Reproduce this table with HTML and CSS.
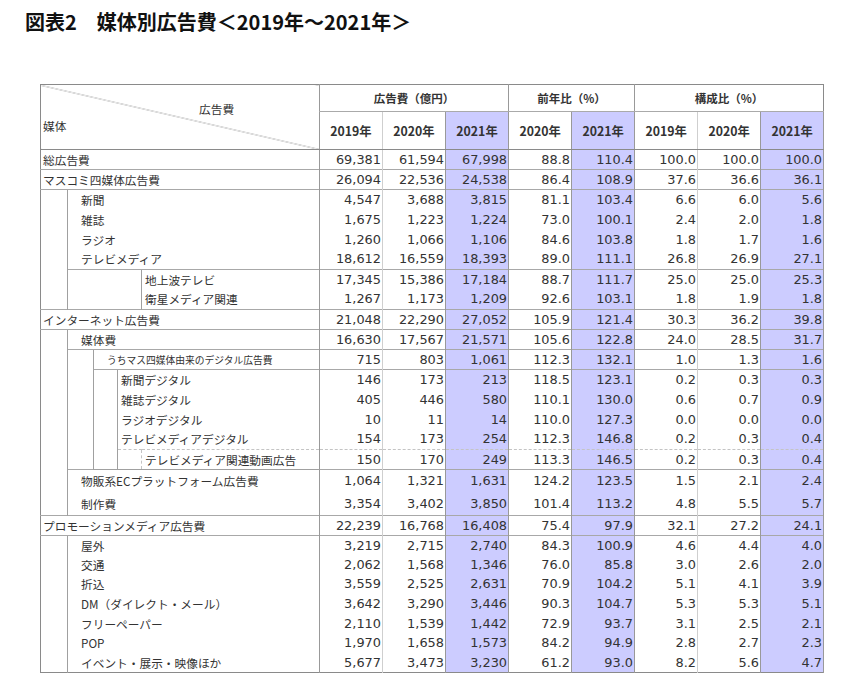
FILE: index.html
```html
<!DOCTYPE html>
<html lang="ja">
<head>
<meta charset="utf-8">
<title>図表2 媒体別広告費</title>
<link rel="stylesheet" href="styles.css">
</head>
<body>
<h1 class="title">図表2　媒体別広告費＜2019年～2021年＞</h1>
<table class="t">
<colgroup>
<col class="w1"><col class="w2"><col class="w3"><col class="w4"><col class="w5">
<col class="wd"><col class="wd"><col class="wd"><col class="wd"><col class="wd"><col class="wd"><col class="wd"><col class="wd">
</colgroup>
<thead>
<tr class="h1">
<th colspan="5" rowspan="2" class="diag"><div class="dg-top">広告費</div><div class="dg-bot">媒体</div></th>
<th colspan="3" class="grp">広告費（億円）</th>
<th colspan="2" class="grp">前年比（%）</th>
<th colspan="3" class="grp">構成比（%）</th>
</tr>
<tr class="h2">
<th class="yr c1">2019年</th><th class="yr">2020年</th><th class="yr s">2021年</th><th class="yr">2020年</th><th class="yr s">2021年</th><th class="yr">2019年</th><th class="yr">2020年</th><th class="yr s">2021年</th>
</tr>
</thead>
<tbody>
<tr><td colspan="5" class="lb">総広告費</td><td class="c1">69,381</td><td>61,594</td><td class="s">67,998</td><td>88.8</td><td class="s">110.4</td><td>100.0</td><td>100.0</td><td class="s">100.0</td></tr>
<tr class="sep"><td colspan="5" class="lb bt">マスコミ四媒体広告費</td><td class="c1">26,094</td><td>22,536</td><td class="s">24,538</td><td>86.4</td><td class="s">108.9</td><td>37.6</td><td>36.6</td><td class="s">36.1</td></tr>
<tr class="sep"><td rowspan="6" class="gap"></td><td colspan="4" class="lb l1 bl bt">新聞</td><td class="c1">4,547</td><td>3,688</td><td class="s">3,815</td><td>81.1</td><td class="s">103.4</td><td>6.6</td><td>6.0</td><td class="s">5.6</td></tr>
<tr><td colspan="4" class="lb l1 bl">雑誌</td><td class="c1">1,675</td><td>1,223</td><td class="s">1,224</td><td>73.0</td><td class="s">100.1</td><td>2.4</td><td>2.0</td><td class="s">1.8</td></tr>
<tr><td colspan="4" class="lb l1 bl">ラジオ</td><td class="c1">1,260</td><td>1,066</td><td class="s">1,106</td><td>84.6</td><td class="s">103.8</td><td>1.8</td><td>1.7</td><td class="s">1.6</td></tr>
<tr><td colspan="4" class="lb l1 bl">テレビメディア</td><td class="c1">18,612</td><td>16,559</td><td class="s">18,393</td><td>89.0</td><td class="s">111.1</td><td>26.8</td><td>26.9</td><td class="s">27.1</td></tr>
<tr class="sep"><td colspan="3" rowspan="2" class="gap bl"></td><td class="lb l4 bl bt">地上波テレビ</td><td class="c1">17,345</td><td>15,386</td><td class="s">17,184</td><td>88.7</td><td class="s">111.7</td><td>25.0</td><td>25.0</td><td class="s">25.3</td></tr>
<tr><td class="lb l4 bl">衛星メディア関連</td><td class="c1">1,267</td><td>1,173</td><td class="s">1,209</td><td>92.6</td><td class="s">103.1</td><td>1.8</td><td>1.9</td><td class="s">1.8</td></tr>
<tr class="sep"><td colspan="5" class="lb bt">インターネット広告費</td><td class="c1">21,048</td><td>22,290</td><td class="s">27,052</td><td>105.9</td><td class="s">121.4</td><td>30.3</td><td>36.2</td><td class="s">39.8</td></tr>
<tr class="sep"><td rowspan="9" class="gap"></td><td colspan="4" class="lb l1 bl bt">媒体費</td><td class="c1">16,630</td><td>17,567</td><td class="s">21,571</td><td>105.6</td><td class="s">122.8</td><td>24.0</td><td>28.5</td><td class="s">31.7</td></tr>
<tr class="sep"><td rowspan="6" class="gap bl"></td><td colspan="3" class="lb l1 small bl bt">うちマス四媒体由来のデジタル広告費</td><td class="c1">715</td><td>803</td><td class="s">1,061</td><td>112.3</td><td class="s">132.1</td><td>1.0</td><td>1.3</td><td class="s">1.6</td></tr>
<tr class="sep"><td rowspan="5" class="gap bl bb"></td><td colspan="2" class="lb l4 bl bt">新聞デジタル</td><td class="c1">146</td><td>173</td><td class="s">213</td><td>118.5</td><td class="s">123.1</td><td>0.2</td><td>0.3</td><td class="s">0.3</td></tr>
<tr><td colspan="2" class="lb l4 bl">雑誌デジタル</td><td class="c1">405</td><td>446</td><td class="s">580</td><td>110.1</td><td class="s">130.0</td><td>0.6</td><td>0.7</td><td class="s">0.9</td></tr>
<tr><td colspan="2" class="lb l4 bl">ラジオデジタル</td><td class="c1">10</td><td>11</td><td class="s">14</td><td>110.0</td><td class="s">127.3</td><td>0.0</td><td>0.0</td><td class="s">0.0</td></tr>
<tr><td colspan="2" class="lb l4 bl">テレビメディアデジタル</td><td class="c1">154</td><td>173</td><td class="s">254</td><td>112.3</td><td class="s">146.8</td><td>0.2</td><td>0.3</td><td class="s">0.4</td></tr>
<tr class="dsep"><td class="gap bl bb"></td><td class="lb l4 dl dt bb">テレビメディア関連動画広告</td><td class="c1">150</td><td>170</td><td class="s">249</td><td>113.3</td><td class="s">146.5</td><td>0.2</td><td>0.3</td><td class="s">0.4</td></tr>
<tr class="sep tall"><td colspan="4" class="lb l1 bl">物販系ECプラットフォーム広告費</td><td class="c1">1,064</td><td>1,321</td><td class="s">1,631</td><td>124.2</td><td class="s">123.5</td><td>1.5</td><td>2.1</td><td class="s">2.4</td></tr>
<tr class="tall"><td colspan="4" class="lb l1 bl">制作費</td><td class="c1">3,354</td><td>3,402</td><td class="s">3,850</td><td>101.4</td><td class="s">113.2</td><td>4.8</td><td>5.5</td><td class="s">5.7</td></tr>
<tr class="sep"><td colspan="5" class="lb bt">プロモーションメディア広告費</td><td class="c1">22,239</td><td>16,768</td><td class="s">16,408</td><td>75.4</td><td class="s">97.9</td><td>32.1</td><td>27.2</td><td class="s">24.1</td></tr>
<tr class="sep pr"><td rowspan="7" class="gap"></td><td colspan="4" class="lb l1 bl bt">屋外</td><td class="c1">3,219</td><td>2,715</td><td class="s">2,740</td><td>84.3</td><td class="s">100.9</td><td>4.6</td><td>4.4</td><td class="s">4.0</td></tr>
<tr class="pr"><td colspan="4" class="lb l1 bl">交通</td><td class="c1">2,062</td><td>1,568</td><td class="s">1,346</td><td>76.0</td><td class="s">85.8</td><td>3.0</td><td>2.6</td><td class="s">2.0</td></tr>
<tr class="pr"><td colspan="4" class="lb l1 bl">折込</td><td class="c1">3,559</td><td>2,525</td><td class="s">2,631</td><td>70.9</td><td class="s">104.2</td><td>5.1</td><td>4.1</td><td class="s">3.9</td></tr>
<tr class="pr"><td colspan="4" class="lb l1 bl">DM（ダイレクト・メール）</td><td class="c1">3,642</td><td>3,290</td><td class="s">3,446</td><td>90.3</td><td class="s">104.7</td><td>5.3</td><td>5.3</td><td class="s">5.1</td></tr>
<tr class="pr"><td colspan="4" class="lb l1 bl">フリーペーパー</td><td class="c1">2,110</td><td>1,539</td><td class="s">1,442</td><td>72.9</td><td class="s">93.7</td><td>3.1</td><td>2.5</td><td class="s">2.1</td></tr>
<tr class="pr"><td colspan="4" class="lb l1 bl">POP</td><td class="c1">1,970</td><td>1,658</td><td class="s">1,573</td><td>84.2</td><td class="s">94.9</td><td>2.8</td><td>2.7</td><td class="s">2.3</td></tr>
<tr class="pr"><td colspan="4" class="lb l1 bl">イベント・展示・映像ほか</td><td class="c1">5,677</td><td>3,473</td><td class="s">3,230</td><td>61.2</td><td class="s">93.0</td><td>8.2</td><td>5.6</td><td class="s">4.7</td></tr>
</tbody>
</table>
</body>
</html>
```

FILE: styles.css
```css
html, body {
  margin: 0;
  padding: 0;
  background: #fff;
}

body {
  font-family: "Noto Sans CJK JP", "Noto Sans", sans-serif;
  color: #333;
}

.title {
  margin: 0;
  padding: 8px 0 0 25px;
  font-size: 20px;
  line-height: 27px;
  font-weight: 700;
  color: #111;
}

.t {
  margin: 49px 0 0 40px;
  border-collapse: collapse;
  table-layout: fixed;
  width: 784px;
  border: 1px solid #8a8a8a;
  font-size: 11.7px;
  line-height: 14px;
}

.w1 { width: 27px; }
.w2 { width: 26px; }
.w3 { width: 24px; }
.w4 { width: 24px; }
.w5 { width: 178px; }
.wd { width: 63px; }

.t th,
.t td {
  padding: 0;
  vertical-align: middle;
  white-space: nowrap;
}

/* header */
.h1 { height: 27px; }
.h2 { height: 38px; }

.diag {
  text-align: left;
  font-weight: 400;
  border-bottom: 1px solid #8a8a8a;
  background: linear-gradient(to top right, transparent calc(50% - 0.6px), #a0a0a0 50%, transparent calc(50% + 0.6px));
  vertical-align: top;
  padding-top: 14px;
}

.dg-top {
  padding-left: 158px;
  line-height: 17px;
}

.dg-bot {
  padding-left: 2px;
  line-height: 17px;
}

.grp {
  font-size: 11.5px;
  font-weight: 700;
  border-left: 1px solid #999;
  border-bottom: 1px solid #aaa;
  text-align: center;
}

.yr {
  font-size: 12.3px;
  font-weight: 700;
  text-align: center;
  border-left: 1px solid #cfcfcf;
  border-bottom: 1px solid #8a8a8a;
}

/* body rows */
tbody tr { height: 20px; }
tbody tr.tall { height: 23px; }
tbody tr.pr { height: 19.6px; }

.t td {
  font-family: "DejaVu Sans", "Noto Sans CJK JP", sans-serif;
  font-size: 12.9px;
  text-align: right;
  padding-right: 1px;
  border-left: 1px solid #cfcfcf;
}

.t .c1 { border-left: 1px solid #999; }

.t .s {
  background: #ccccff;
  border-left: 1px solid #999;
  border-right: 1px solid #999;
}

.t tr.sep td { border-top: 1px solid #a8a8a8; }
.t tr.dsep td { border-top: 1px dashed #c4c4c4; }

/* label cells */
.t td.lb {
  font-family: "Noto Sans CJK JP", "Noto Sans", sans-serif;
  font-size: 11.7px;
  text-align: left;
  padding-left: 2px;
  padding-right: 0;
  border-left: none;
  border-top: none;
}

.t td.gap {
  border-left: none;
  border-top: none;
  padding: 0;
}

.t td.l1 { padding-left: 13px; }
.t td.l4 { padding-left: 3px; }
.t td.small { font-size: 9.75px; }

.t td.bl { border-left: 1px solid #a0a0a0; }
.t td.bt { border-top: 1px solid #a0a0a0; }
.t td.bb { border-bottom: 1px solid #a0a0a0; }
.t td.dl { border-left: 1px dashed #c4c4c4; }
.t td.dt { border-top: 1px dashed #c4c4c4; }
```
